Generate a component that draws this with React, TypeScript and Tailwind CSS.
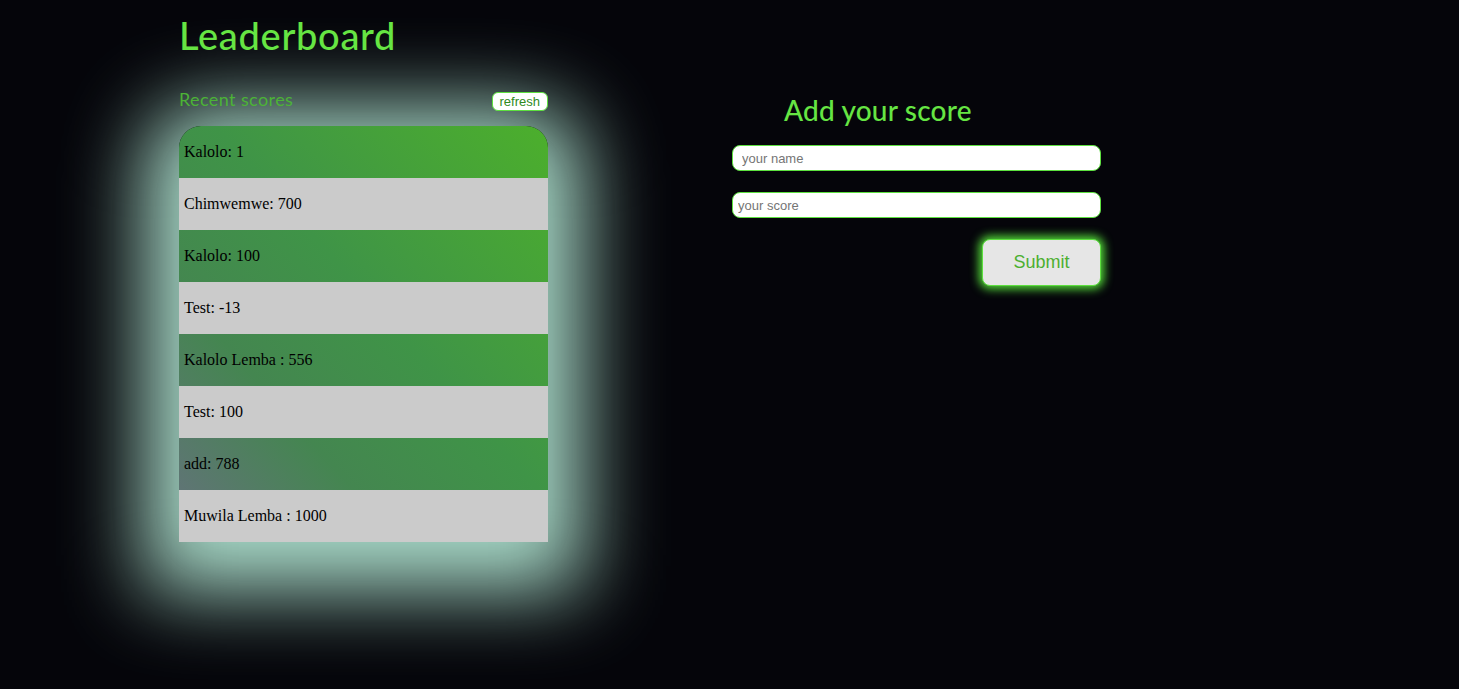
import { useState } from 'react';

type Score = { user: string; score: string };

const scores: Score[] = [
  { user: 'Kalolo', score: '1' },
  { user: 'Chimwemwe', score: '700' },
  { user: 'Kalolo', score: '100' },
  { user: 'Test', score: '-13' },
  { user: 'Kalolo Lemba ', score: '556' },
  { user: 'Test', score: '100' },
  { user: 'add', score: '788' },
  { user: 'Muwila Lemba ', score: '1000' },
];

export default function App() {
  const [name, setName] = useState('');
  const [score, setScore] = useState('');

  return (
    <div className="min-h-screen w-full bg-[#05050a] font-['Lato',sans-serif]">
      <div className="flex gap-[184px] pl-[179px]">
        {/* Recent scores */}
        <section className="w-[369px] pt-[12px]">
          <h1 className="text-[38px] leading-[46px] font-medium tracking-[0.7px] text-[#66e543]">Leaderboard</h1>
          <div className="mt-[29px] flex items-center justify-between">
            <h2 className="text-[18px] leading-[24px] tracking-[0.4px] text-[#4cb336]">Recent scores</h2>
            <button className="mt-[5px] h-[19px] rounded-[6px] border border-[#5de03f] bg-white px-[7px] font-['Liberation_Sans',sans-serif] text-[13px] leading-[15px] text-[#2f8a22]">
              refresh
            </button>
          </div>
          <ul className="mt-[15px] overflow-hidden rounded-t-[22px] bg-[linear-gradient(to_top_right,#66707e_0%,#448650_30%,#3f9447_55%,#4caf2c_100%)] shadow-[0_15px_80px_35px_rgba(168,218,200,1)]">
            {scores.map((s, i) => (
              <li
                key={i}
                className={`flex h-[52px] items-center pl-[5px] font-['Liberation_Serif',serif] text-[16px] text-black ${
                  i % 2 === 1 ? 'bg-[#cbcbcb]' : ''
                }`}
              >
                {s.user}: {s.score}
              </li>
            ))}
          </ul>
        </section>

        {/* Add score form */}
        <section className="w-[369px] pt-[92px]">
          <h2 className="pl-[52px] text-[28px] leading-[36px] font-medium tracking-[0.2px] text-[#66e543]">Add your score</h2>
          <form className="mt-[17px] flex flex-col" onSubmit={(e) => e.preventDefault()}>
            <input
              value={name}
              onChange={(e) => setName(e.target.value)}
              placeholder="your name"
              className="h-[26px] rounded-[8px] border border-[#5de03f] bg-white pl-[9px] font-['Liberation_Sans',sans-serif] text-[13px] text-black outline-none placeholder:text-[#757575]"
            />
            <input
              value={score}
              onChange={(e) => setScore(e.target.value)}
              placeholder="your score"
              className="mt-[21px] h-[26px] rounded-[8px] border border-[#5de03f] bg-white pl-[5px] font-['Liberation_Sans',sans-serif] text-[13px] text-black outline-none placeholder:text-[#757575]"
            />
            <button
              type="submit"
              className="mt-[21px] ml-auto h-[47px] w-[119px] rounded-[8px] border border-[#5de03f] bg-[#e6e6e6] font-['Liberation_Sans',sans-serif] text-[18px] text-[#4caf30] shadow-[0_0_10px_3px_#55e03a]"
            >
              Submit
            </button>
          </form>
        </section>
      </div>
    </div>
  );
}
